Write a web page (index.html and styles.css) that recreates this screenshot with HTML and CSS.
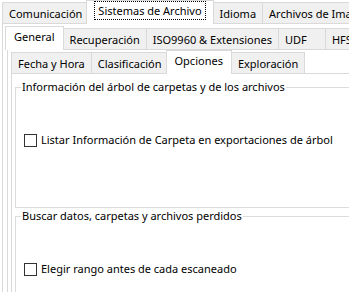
FILE: index.html
```html
<!DOCTYPE html>
<html lang="es">
<head>
    <meta charset="UTF-8">
    <meta name="viewport" content="width=device-width, initial-scale=1.0">
    <title>Opciones - Sistemas de Archivo</title>
    <link rel="stylesheet" href="styles.css">
</head>
<body>
    <div class="tabctl level1">
        <div class="strip">
            <div class="tab">Comunicación</div>
            <div class="tab selected"><span class="focus">Sistemas de Archivo</span></div>
            <div class="tab">Idioma</div>
            <div class="tab">Archivos de Imagen</div>
        </div>
        <div class="panel">

            <div class="tabctl level2">
                <div class="strip">
                    <div class="tab selected">General</div>
                    <div class="tab">Recuperación</div>
                    <div class="tab">ISO9960 &amp; Extensiones</div>
                    <div class="tab">UDF</div>
                    <div class="tab">HFS</div>
                </div>
                <div class="panel">

                    <div class="tabctl level3">
                        <div class="strip">
                            <div class="tab">Fecha y Hora</div>
                            <div class="tab">Clasificación</div>
                            <div class="tab selected">Opciones</div>
                            <div class="tab">Exploración</div>
                        </div>
                        <div class="panel">
                            <fieldset class="group">
                                <legend>Información del árbol de carpetas y de los archivos</legend>
                                <label class="check-row">
                                    <span class="checkbox"></span>
                                    Listar Información de Carpeta en exportaciones de árbol
                                </label>
                            </fieldset>
                            <fieldset class="group">
                                <legend>Buscar datos, carpetas y archivos perdidos</legend>
                                <label class="check-row">
                                    <span class="checkbox"></span>
                                    Elegir rango antes de cada escaneado
                                </label>
                            </fieldset>
                        </div>
                    </div>

                </div>
            </div>

        </div>
    </div>
</body>
</html>
```

FILE: styles.css
```css
body {
    margin: 0;
    background: #fff;
    color: #000;
    font-family: "Noto Sans", "Open Sans", sans-serif;
    font-size: 11px;
    overflow: hidden;
}
.tabctl {
    width: 460px;
}
.strip {
    display: flex;
    align-items: flex-end;
    height: 23px;
    position: relative;
    z-index: 1;
}
.tab {
    min-width: 34px;
    height: 20px;
    line-height: 22px;
    padding: 0 6px;
    margin-right: -1px;
    border: 1px solid #d9d9d9;
    border-bottom: none;
    background: #f0f0f0;
    white-space: nowrap;
}
.tab.selected {
    position: relative;
    z-index: 2;
    height: 23px;
    line-height: 20px;
    margin: 0 -1px -1px -2px;
    padding: 0 8px;
    background: #fff;
}
.panel {
    border: 1px solid #d9d9d9;
    background: #fff;
}
.level1 {
    margin-left: 2px;
}
.level1 > .panel {
    height: 400px;
    padding: 2px 0 0 4px;
}
.level2 > .panel {
    padding-left: 3px;
}
.level3 > .panel {
    padding-left: 3px;
}
.focus {
    outline: 1px dotted #000;
    padding: 0 3px;
    line-height: 17px;
    display: inline-block;
}
.group {
    margin: 0;
    padding: 0 0 59px 0;
    border: 1px solid #dcdcdc;
}
.group:first-child {
    margin-top: 5px;
}
.group legend {
    margin-left: 5px;
    padding: 0 1px;
    line-height: 16px;
}
.check-row {
    display: flex;
    align-items: center;
    gap: 4px;
    margin: 37px 0 0 8px;
    line-height: 16px;
}
.checkbox {
    width: 11px;
    height: 11px;
    border: 1px solid #333;
    background: #fff;
}
```
